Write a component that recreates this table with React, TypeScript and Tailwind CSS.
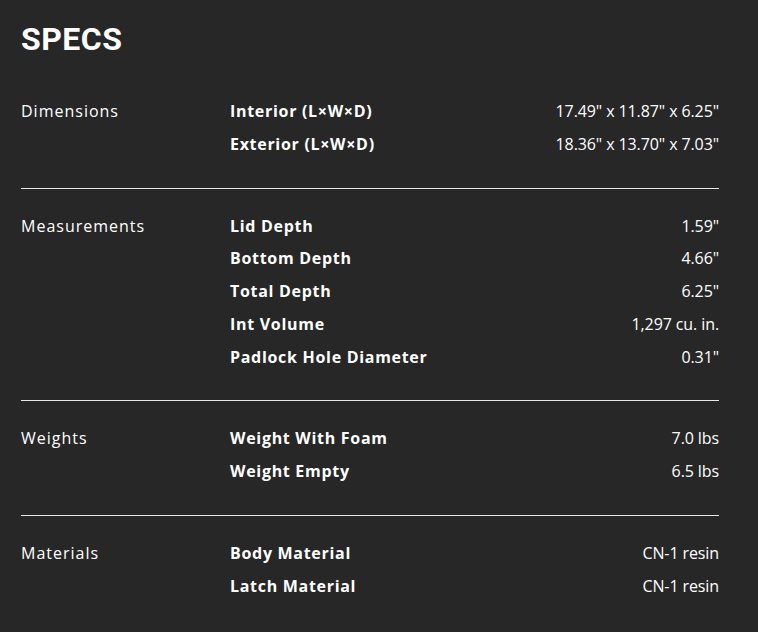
const specs = [
  {
    group: "Dimensions",
    rows: [
      ["Interior (L×W×D)", "17.49\" x 11.87\" x 6.25\""],
      ["Exterior (L×W×D)", "18.36\" x 13.70\" x 7.03\""],
    ],
  },
  {
    group: "Measurements",
    rows: [
      ["Lid Depth", "1.59\""],
      ["Bottom Depth", "4.66\""],
      ["Total Depth", "6.25\""],
      ["Int Volume", "1,297 cu. in."],
      ["Padlock Hole Diameter", "0.31\""],
    ],
  },
  {
    group: "Weights",
    rows: [
      ["Weight With Foam", "7.0 lbs"],
      ["Weight Empty", "6.5 lbs"],
    ],
  },
  {
    group: "Materials",
    rows: [
      ["Body Material", "CN-1 resin"],
      ["Latch Material", "CN-1 resin"],
    ],
  },
];

export default function App() {
  return (
    <div className="min-h-[632px] bg-[#272727] text-white px-[21px] pt-[19px] font-['Open_Sans',sans-serif]">
      {/* Header */}
      <h1 className="font-['Roboto',sans-serif] font-bold text-[32px] leading-[40px] tracking-[0.5px]">
        SPECS
      </h1>

      <div className="w-[698px] mt-[36px]">
        {specs.map((section, i) => (
          <div
            key={section.group}
            className={`flex ${i === 0 ? "pt-0" : "pt-[21px]"} ${
              i < specs.length - 1 ? "pb-[27px] border-b border-[#e8e8e8]" : ""
            }`}
          >
            <div className="w-[209px] shrink-0 text-[16px] leading-[32.75px] tracking-[1px]">
              {section.group}
            </div>
            <div className="flex-1">
              {section.rows.map(([label, value]) => (
                <div
                  key={label}
                  className="flex justify-between text-[16px] leading-[32.75px]"
                >
                  <span className="font-bold tracking-[0.7px]">{label}</span>
                  <span className="tracking-[-0.1px]">{value}</span>
                </div>
              ))}
            </div>
          </div>
        ))}
      </div>
    </div>
  );
}
